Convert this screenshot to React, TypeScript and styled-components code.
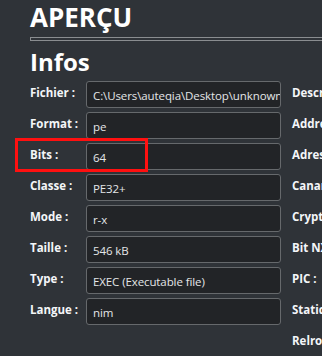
import styled, { createGlobalStyle } from 'styled-components';

const GlobalStyle = createGlobalStyle`
  html, body {
    margin: 0;
    padding: 0;
    background: #2f3338;
    overflow: hidden;
  }
`;

const Page = styled.div`
  width: 640px;
  padding: 0 0 0 30px;
  font-family: "Open Sans", "Noto Sans", sans-serif;
  color: #ffffff;
`;

const Title = styled.h1`
  margin: 0;
  font-size: 26px;
  line-height: 34px;
  font-weight: 700;
`;

const Divider = styled.hr`
  margin: 3px 0 0 0;
  height: 2px;
  border: 1px solid #8a8d90;
  background: #2f3338;
`;

const Subtitle = styled.h2`
  margin: 0;
  padding-top: 6px;
  font-size: 24px;
  line-height: 30px;
  font-weight: 700;
`;

const Columns = styled.div`
  display: flex;
  gap: 11px;
  margin-top: 4px;
`;

const Column = styled.div`
  display: flex;
  flex-direction: column;
  gap: 4px;
`;

const Row = styled.div`
  position: relative;
  display: flex;
  align-items: center;
  height: 27px;
`;

const Label = styled.span<{ $width: number }>`
  width: ${p => p.$width}px;
  flex-shrink: 0;
  padding-bottom: 4px;
  font-size: 11.5px;
  font-weight: 700;
  color: #f4f6f8;
  white-space: nowrap;
`;

const Field = styled.div`
  box-sizing: border-box;
  width: 195px;
  height: 27px;
  padding: 2px 6px 0;
  display: flex;
  align-items: center;
  background: #222427;
  border: 1px solid #66696c;
  border-radius: 3px;
  font-size: 11.5px;
  letter-spacing: -0.1px;
  color: #e4e6e8;
  white-space: nowrap;
  overflow: hidden;
`;

const Highlight = styled.div`
  position: absolute;
  left: -15px;
  top: -5px;
  width: 133px;
  height: 34px;
  box-sizing: border-box;
  border: 3px solid #ff1010;
  pointer-events: none;
`;

const leftRows = [
  { label: 'Fichier :', value: 'C:\\Users\\auteqia\\Desktop\\unknown.exe' },
  { label: 'Format :', value: 'pe' },
  { label: 'Bits :', value: '64', mark: true },
  { label: 'Classe :', value: 'PE32+' },
  { label: 'Mode :', value: 'r-x' },
  { label: 'Taille :', value: '546 kB' },
  { label: 'Type :', value: 'EXEC (Executable file)' },
  { label: 'Langue :', value: 'nim' },
];

const rightRows = [
  { label: 'Description :', value: '' },
  { label: 'Addresse :', value: '' },
  { label: 'Adresse de base :', value: '' },
  { label: 'Canary :', value: '' },
  { label: 'Crypto :', value: '' },
  { label: 'Bit NX :', value: '' },
  { label: 'PIC :', value: '' },
  { label: 'Statique :', value: '' },
  { label: 'Relro :', value: '' },
];

export default function App() {
  return (
    <>
      <GlobalStyle />
      <Page>
        <Title>APERÇU</Title>
        <Divider />
        <Subtitle>Infos</Subtitle>
        <Columns>
          <Column>
            {leftRows.map(r => (
              <Row key={r.label}>
                <Label $width={56}>{r.label}</Label>
                <Field>{r.value}</Field>
                {r.mark && <Highlight />}
              </Row>
            ))}
          </Column>
          <Column>
            {rightRows.map(r => (
              <Row key={r.label}>
                <Label $width={110}>{r.label}</Label>
                <Field>{r.value}</Field>
              </Row>
            ))}
          </Column>
        </Columns>
      </Page>
    </>
  );
}
